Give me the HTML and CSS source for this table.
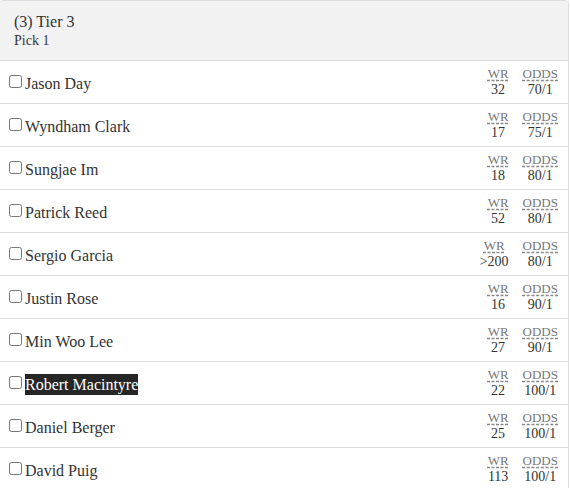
FILE: index.html
```html
<!DOCTYPE html>
<html>
<head>
<meta charset="utf-8">
<link rel="stylesheet" href="styles.css">
</head>
<body>
<div class="panel">
  <div class="panel-head">
    <div class="tier">(3) Tier 3</div>
    <div class="pick">Pick 1</div>
  </div>
  <div class="row"><label class="player"><input type="checkbox"><span>Jason Day</span></label>
    <div class="stats"><div class="stat"><abbr title="World Rank">WR</abbr><span>32</span></div><div class="stat"><abbr title="Odds">ODDS</abbr><span>70/1</span></div></div></div>
  <div class="row"><label class="player"><input type="checkbox"><span>Wyndham Clark</span></label>
    <div class="stats"><div class="stat"><abbr title="World Rank">WR</abbr><span>17</span></div><div class="stat"><abbr title="Odds">ODDS</abbr><span>75/1</span></div></div></div>
  <div class="row"><label class="player"><input type="checkbox"><span>Sungjae Im</span></label>
    <div class="stats"><div class="stat"><abbr title="World Rank">WR</abbr><span>18</span></div><div class="stat"><abbr title="Odds">ODDS</abbr><span>80/1</span></div></div></div>
  <div class="row"><label class="player"><input type="checkbox"><span>Patrick Reed</span></label>
    <div class="stats"><div class="stat"><abbr title="World Rank">WR</abbr><span>52</span></div><div class="stat"><abbr title="Odds">ODDS</abbr><span>80/1</span></div></div></div>
  <div class="row"><label class="player"><input type="checkbox"><span>Sergio Garcia</span></label>
    <div class="stats"><div class="stat"><abbr title="World Rank">WR</abbr><span>&gt;200</span></div><div class="stat"><abbr title="Odds">ODDS</abbr><span>80/1</span></div></div></div>
  <div class="row"><label class="player"><input type="checkbox"><span>Justin Rose</span></label>
    <div class="stats"><div class="stat"><abbr title="World Rank">WR</abbr><span>16</span></div><div class="stat"><abbr title="Odds">ODDS</abbr><span>90/1</span></div></div></div>
  <div class="row"><label class="player"><input type="checkbox"><span>Min Woo Lee</span></label>
    <div class="stats"><div class="stat"><abbr title="World Rank">WR</abbr><span>27</span></div><div class="stat"><abbr title="Odds">ODDS</abbr><span>90/1</span></div></div></div>
  <div class="row"><label class="player"><input type="checkbox"><span class="selected">Robert Macintyre</span></label>
    <div class="stats"><div class="stat"><abbr title="World Rank">WR</abbr><span>22</span></div><div class="stat"><abbr title="Odds">ODDS</abbr><span>100/1</span></div></div></div>
  <div class="row"><label class="player"><input type="checkbox"><span>Daniel Berger</span></label>
    <div class="stats"><div class="stat"><abbr title="World Rank">WR</abbr><span>25</span></div><div class="stat"><abbr title="Odds">ODDS</abbr><span>100/1</span></div></div></div>
  <div class="row"><label class="player"><input type="checkbox"><span>David Puig</span></label>
    <div class="stats"><div class="stat"><abbr title="World Rank">WR</abbr><span>113</span></div><div class="stat"><abbr title="Odds">ODDS</abbr><span>100/1</span></div></div></div>
</div>
</body>
</html>
```
FILE: styles.css
```css
html, body {
  margin: 0;
  padding: 0;
  background: #fff;
}
body {
  font-family: "Liberation Serif", "Times New Roman", serif;
  color: #333;
  overflow: hidden;
}
.panel {
  width: 568px;
  margin-left: -1px;
  border: 1px solid #ddd;
  border-radius: 4px;
  overflow: hidden;
}
.panel-head {
  background: #f2f2f2;
  height: 59px;
  box-sizing: border-box;
  padding: 11px 14px 0;
}
.tier {
  font-size: 16px;
  line-height: 20px;
}
.pick {
  font-size: 14px;
  line-height: 17px;
}
.row {
  display: flex;
  align-items: center;
  height: 42px;
  border-top: 1px solid #ddd;
  padding: 0 10px 0 5px;
}
.player {
  display: flex;
  align-items: center;
  font-size: 16px;
  padding-top: 2px;
}
.player input {
  margin: 0 3px 3px 4px;
  width: 13px;
  height: 13px;
}
.player span {
  line-height: 21px;
}
.selected {
  background: #262626;
  color: #fff;
}
.stats {
  margin-left: auto;
  display: flex;
  gap: 14px;
  padding-top: 1px;
}
.stat {
  display: flex;
  flex-direction: column;
  align-items: center;
  font-size: 13px;
  line-height: 15px;
}
.stat span {
  font-size: 14px;
  line-height: 18px;
}
.stat abbr {
  color: #777;
  text-decoration: underline dashed #888;
  text-underline-offset: 2px;
  cursor: help;
}
```
